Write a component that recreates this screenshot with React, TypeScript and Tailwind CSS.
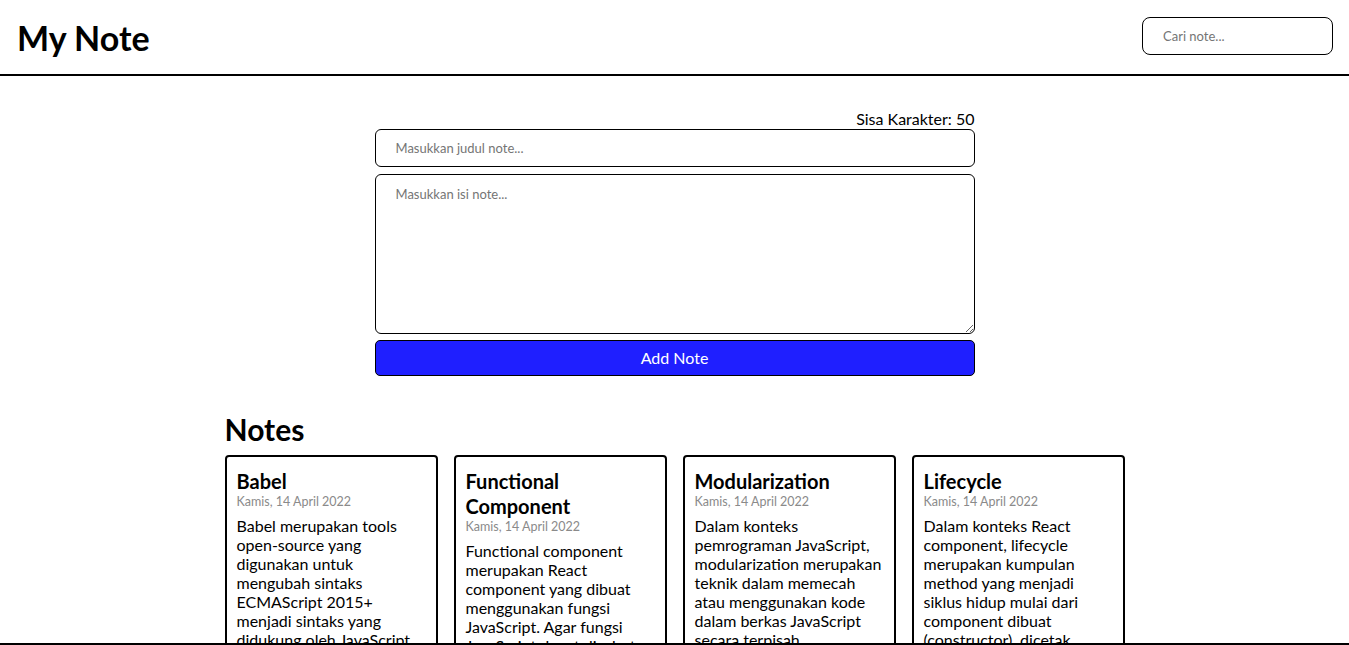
import { useState } from "react";

const notes = [
  {
    title: "Babel",
    date: "Kamis, 14 April 2022",
    body: "Babel merupakan tools open-source yang digunakan untuk mengubah sintaks ECMAScript 2015+ menjadi sintaks yang didukung oleh JavaScript engine versi lama. Babel sering dipakai ketika kita menggunakan sintaks terbaru termasuk sintaks JSX.",
  },
  {
    title: "Functional Component",
    date: "Kamis, 14 April 2022",
    body: "Functional component merupakan React component yang dibuat menggunakan fungsi JavaScript. Agar fungsi JavaScript dapat disebut component, ia harus mengembalikan React element dan dipanggil layaknya React component.",
  },
  {
    title: "Modularization",
    date: "Kamis, 14 April 2022",
    body: "Dalam konteks pemrograman JavaScript, modularization merupakan teknik dalam memecah atau menggunakan kode dalam berkas JavaScript secara terpisah berdasarkan tanggung jawabnya masing-masing.",
  },
  {
    title: "Lifecycle",
    date: "Kamis, 14 April 2022",
    body: "Dalam konteks React component, lifecycle merupakan kumpulan method yang menjadi siklus hidup mulai dari component dibuat (constructor), dicetak (render), pasca-cetak (componentDidMount), dan sebagainya.",
  },
];

export default function App() {
  const [title, setTitle] = useState("");
  const [body, setBody] = useState("");
  const [search, setSearch] = useState("");

  const shown = notes.filter((n) => n.title.toLowerCase().includes(search.toLowerCase()));

  return (
    <div className="min-h-screen bg-white text-black" style={{ fontFamily: "Lato, 'Noto Sans', sans-serif" }}>
      <header className="flex h-[76px] items-center justify-between border-b-2 border-black pl-[17px] pr-4">
        <h1 className="text-[34px] font-bold">My Note</h1>
        <input
          value={search}
          onChange={(e) => setSearch(e.target.value)}
          placeholder="Cari note..."
          className="mb-[2px] h-[38px] w-[191px] rounded-lg border border-black px-5 text-[13px] outline-none placeholder:text-[#757575]"
        />
      </header>

      <main>
        <section className="mx-auto mt-[33px] flex w-[600px] flex-col">
          <p className="text-right text-base leading-[20px]">Sisa Karakter: {50 - title.length}</p>
          <input
            value={title}
            maxLength={50}
            onChange={(e) => setTitle(e.target.value)}
            placeholder="Masukkan judul note..."
            className="h-[38px] w-full rounded-md border border-black px-5 text-[13px] outline-none placeholder:text-[#757575]"
          />
          <textarea
            value={body}
            onChange={(e) => setBody(e.target.value)}
            placeholder="Masukkan isi note..."
            className="mt-[7px] h-[160px] w-full rounded-md border border-black px-5 py-[10px] text-[13px] outline-none placeholder:text-[#757575]"
          />
          <button className="mt-[6px] h-9 w-full rounded-[5px] border border-black bg-[#1f1fff] text-base text-white">Add Note</button>
        </section>

        <section className="mx-auto mt-[37px] w-[900px]">
          <h2 className="text-[30px] font-bold leading-[32px]">Notes</h2>
          <div className="mt-[10px] grid grid-cols-4 gap-4">
            {shown.map((n) => (
              <div key={n.title} className="rounded-[4px] border-2 border-black px-[10px] pt-[12px] pb-3">
                <h3 className="text-[20px] font-bold leading-[25px]">{n.title}</h3>
                <p className="text-[12.5px] leading-[16px] text-[#8a8a8a]">{n.date}</p>
                <p className="mt-[6px] text-base leading-[19px]">{n.body}</p>
              </div>
            ))}
          </div>
        </section>
      </main>

      <div className="fixed inset-x-0 bottom-0 h-[2px] bg-black" />
    </div>
  );
}
